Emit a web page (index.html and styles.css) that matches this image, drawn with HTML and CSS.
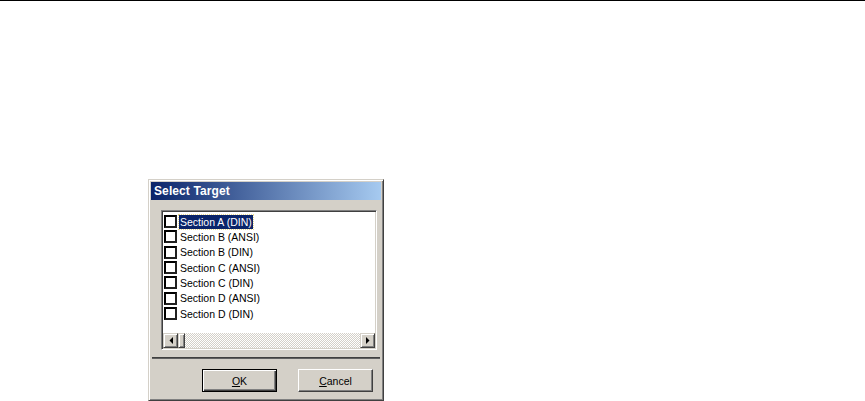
FILE: index.html
```html
<!DOCTYPE html>
<html>
<head>
<meta charset="utf-8">
<title>Select Target</title>
<link rel="stylesheet" href="styles.css">
</head>
<body>
<div class="topline"></div>
<div class="window">
  <div class="titlebar"><span class="title">Select Target</span></div>
  <div class="client">
    <div class="listbox">
      <ul class="items">
        <li class="item selected"><span class="check"></span><span class="label">Section A (DIN)</span></li>
        <li class="item"><span class="check"></span><span class="label">Section B (ANSI)</span></li>
        <li class="item"><span class="check"></span><span class="label">Section B (DIN)</span></li>
        <li class="item"><span class="check"></span><span class="label">Section C (ANSI)</span></li>
        <li class="item"><span class="check"></span><span class="label">Section C (DIN)</span></li>
        <li class="item"><span class="check"></span><span class="label">Section D (ANSI)</span></li>
        <li class="item"><span class="check"></span><span class="label">Section D (DIN)</span></li>
      </ul>
      <div class="hscroll">
        <div class="sbtn"><svg width="4" height="7" viewBox="0 0 4 7"><polygon points="4,0 4,7 0.5,3.5" fill="#000"/></svg></div>
        <div class="thumb"></div>
        <div class="track"></div>
        <div class="sbtn"><svg width="4" height="7" viewBox="0 0 4 7"><polygon points="0,0 0,7 3.5,3.5" fill="#000"/></svg></div>
      </div>
    </div>
    <div class="separator"></div>
    <div class="buttons">
      <button class="btn default"><u>O</u>K</button>
      <button class="btn"><u>C</u>ancel</button>
    </div>
  </div>
</div>
</body>
</html>
```

FILE: styles.css
```css
* { box-sizing: border-box; }
html, body { margin: 0; padding: 0; background: #fff; }
body {
  font-family: "Liberation Sans", Arial, sans-serif;
  font-size: 10.5px;
  color: #000;
}
.topline { height: 1px; background: #000; }

.window {
  margin: 178px 0 0 148px;
  width: 236px;
  height: 222px;
  background: #d4d0c8;
  border: 1px solid;
  border-color: #d4d0c8 #404040 #404040 #d4d0c8;
  box-shadow: inset 1px 1px #fff, inset -1px -1px #808080;
  padding: 2px;
  display: flex;
  flex-direction: column;
}

.titlebar {
  height: 18px;
  background: linear-gradient(to right, #0a246a, #a6caf0);
  display: flex;
  align-items: center;
  padding-left: 3px;
}
.title {
  color: #fff;
  font-weight: bold;
  font-size: 12px;
  letter-spacing: 0.1px;
}

.client {
  flex: 1;
  padding-top: 10px;
  display: flex;
  flex-direction: column;
}

.listbox {
  margin-left: 10px;
  width: 216px;
  height: 140px;
  background: #fff;
  border: 1px solid;
  border-color: #808080 #fff #fff #808080;
  box-shadow: inset 1px 1px #404040, inset -1px -1px #d4d0c8;
  padding: 1px;
  display: flex;
  flex-direction: column;
}

.items {
  list-style: none;
  margin: 0;
  padding: 2px 0 0 1px;
  flex: 1;
}
.item {
  height: 15.33px;
  display: flex;
  align-items: center;
}
.check {
  width: 13px;
  height: 13px;
  border: 2px solid;
  border-color: #000 #202020 #202020 #000;
  background: #fff;
  flex: none;
}
.label {
  margin-left: 2px;
  padding: 0 1px;
  line-height: 13px;
  white-space: nowrap;
  padding-top: 1px;
}
.selected .label {
  background: #0a246a;
  color: #fff;
  outline: 1px dotted #e8d890;
}

.hscroll {
  height: 15px;
  display: flex;
}
.sbtn {
  width: 15px;
  height: 15px;
  background: #d4d0c8;
  border: 1px solid;
  border-color: #d4d0c8 #404040 #404040 #d4d0c8;
  box-shadow: inset 1px 1px #fff, inset -1px -1px #808080;
  display: flex;
  align-items: center;
  justify-content: center;
  flex: none;
}
.thumb {
  width: 7px;
  height: 15px;
  background: #d4d0c8;
  border: 1px solid;
  border-color: #d4d0c8 #404040 #404040 #d4d0c8;
  box-shadow: inset 1px 1px #fff, inset -1px -1px #808080;
  flex: none;
}
.track {
  flex: 1;
  background: repeating-conic-gradient(#d4d0c8 0 25%, #fff 0 50%);
  background-size: 2px 2px;
}

.separator {
  margin: 7px 1px 0 1px;
  height: 2px;
  border-top: 1px solid #404040;
  border-bottom: 1px solid #606060;
}

.buttons {
  display: flex;
  gap: 21px;
  padding-left: 51px;
  margin-top: 10px;
}
.btn {
  width: 75px;
  height: 23px;
  font-family: "Liberation Sans", Arial, sans-serif;
  font-size: 10.5px;
  color: #000;
  background: #d4d0c8;
  border: 1px solid;
  border-color: #fff #404040 #404040 #fff;
  box-shadow: inset -1px -1px #808080, inset 1px 1px #d4d0c8;
  padding: 0;
  margin: 0;
}
.btn.default {
  border-color: #000;
  box-shadow: inset 1px 1px #fff, inset -1px -1px #404040, inset -2px -2px #808080;
}
```
